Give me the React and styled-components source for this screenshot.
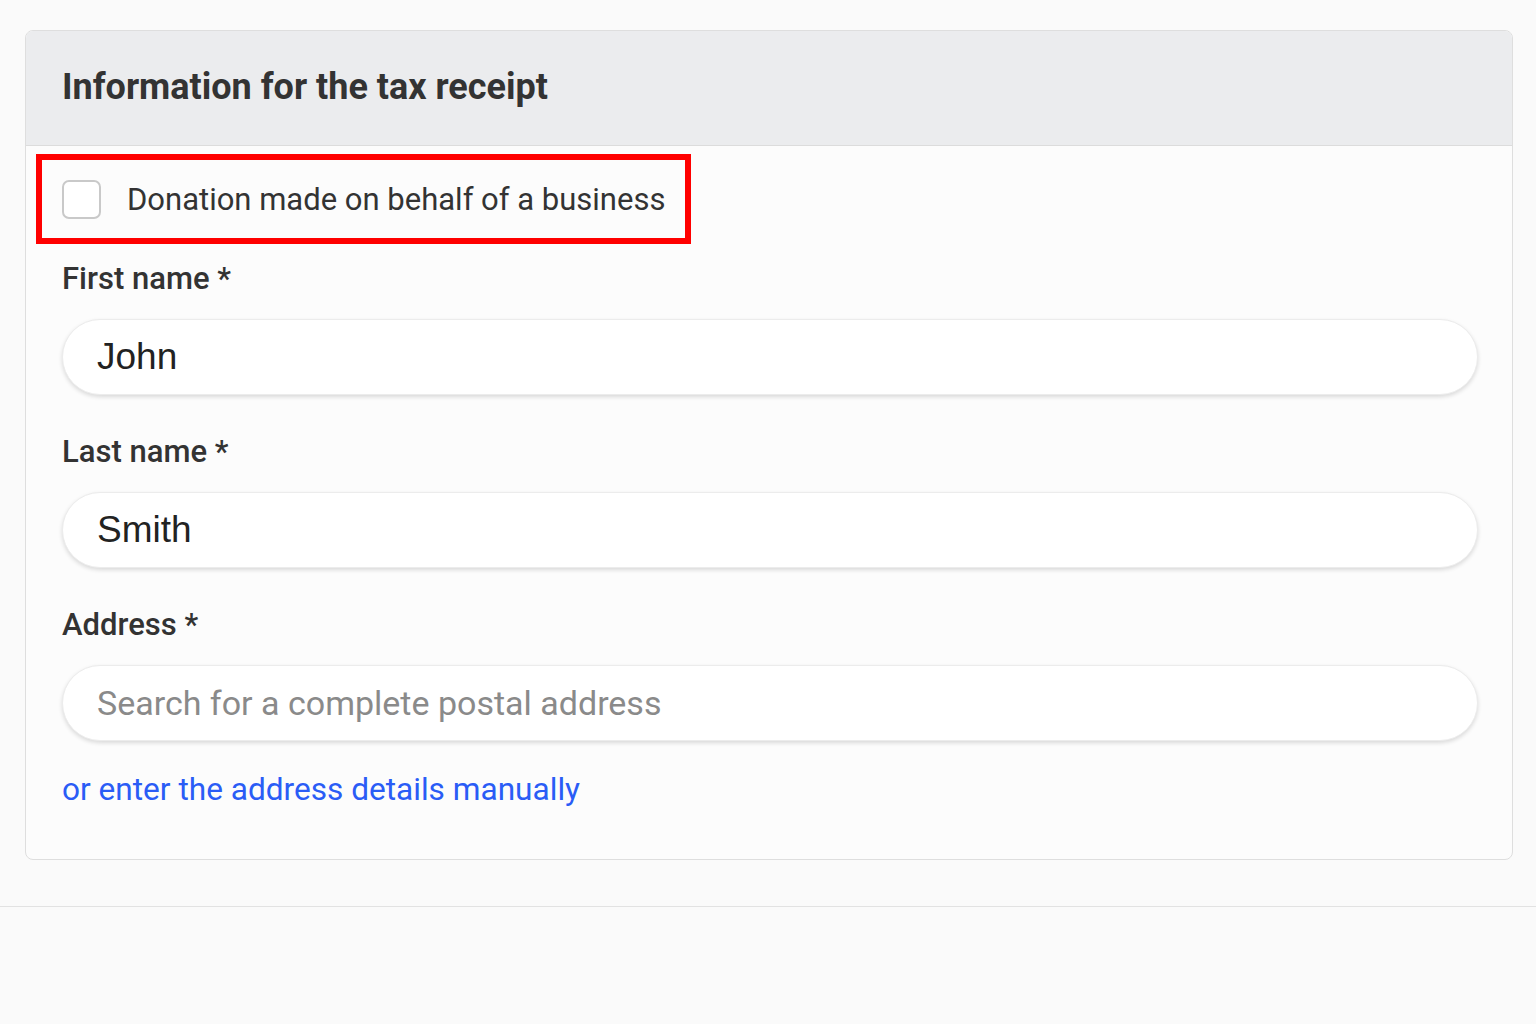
import styled, { createGlobalStyle } from 'styled-components';

const GlobalStyle = createGlobalStyle`
    html, body {
        margin: 0;
        padding: 0;
        background: #fafafa;
        font-family: Roboto, "Liberation Sans", sans-serif;
        color: #333;
    }
`;

const Page = styled.div`
    min-height: 1024px;
    padding-top: 30px;
    box-sizing: border-box;
`;

const Card = styled.section`
    margin: 0 23px 0 25px;
    border: 1px solid #dedede;
    border-radius: 8px;
    background: #fcfcfc;
    overflow: hidden;
`;

const CardHeader = styled.header`
    box-sizing: border-box;
    height: 115px;
    display: flex;
    align-items: center;
    padding: 0 36px 2px;
    background: #ebecee;
    border-bottom: 1px solid #dcdcdc;
`;

const Title = styled.h2`
    margin: 0;
    font-size: 36px;
    font-weight: 700;
    color: #333;
`;

const CardBody = styled.div`
    display: flex;
    flex-direction: column;
    padding: 8px 34px 51px 36px;
`;

const CheckRow = styled.label`
    box-sizing: border-box;
    display: flex;
    align-items: center;
    gap: 26px;
    width: fit-content;
    height: 90px;
    margin-left: -26px;
    padding: 0 20px 0 20px;
    border: 6px solid #ff0000;
    font-size: 31px;
    color: #333;
    cursor: pointer;
`;

const Box = styled.span`
    width: 35px;
    height: 35px;
    border: 2px solid #c9c9c9;
    border-radius: 7px;
    background: #fff;
`;

const Field = styled.div`
    display: flex;
    flex-direction: column;
    gap: 22px;
    margin-top: ${props => props.first ? '17px' : '39px'};
`;

const Label = styled.div`
    font-size: 31px;
    font-weight: 500;
    line-height: 36px;
    color: #333;
`;

const Input = styled.input`
    box-sizing: border-box;
    height: 76px;
    padding: 0 34px;
    border: 1px solid #ececec;
    border-radius: 38px;
    background: #fff;
    box-shadow: 0 2px 4px rgba(0, 0, 0, 0.14);
    font-family: "Liberation Sans", Arial, sans-serif;
    font-size: 37px;
    color: #222;
    outline: none;

    &::placeholder {
        font-family: Roboto, sans-serif;
        font-size: 34px;
        color: #8a8a8a;
    }
`;

const ManualLink = styled.a`
    margin-top: 31px;
    font-size: 31.6px;
    line-height: 36px;
    color: #2a5cf6;
    text-decoration: none;
    cursor: pointer;
`;

const Divider = styled.hr`
    margin: 46px 0 0;
    border: 0;
    border-top: 1px solid #e2e2e2;
`;

const fields = [
    { label: 'First name *', value: 'John' },
    { label: 'Last name *', value: 'Smith' },
    { label: 'Address *', placeholder: 'Search for a complete postal address' },
];

export default function App() {
    return (
        <Page>
            <GlobalStyle />
            <Card>
                <CardHeader>
                    <Title>Information for the tax receipt</Title>
                </CardHeader>
                <CardBody>
                    <CheckRow>
                        <Box />
                        Donation made on behalf of a business
                    </CheckRow>
                    {fields.map((f, i) => (
                        <Field key={f.label} first={i === 0}>
                            <Label>{f.label}</Label>
                            <Input defaultValue={f.value} placeholder={f.placeholder} />
                        </Field>
                    ))}
                    <ManualLink>or enter the address details manually</ManualLink>
                </CardBody>
            </Card>
            <Divider />
        </Page>
    );
}
